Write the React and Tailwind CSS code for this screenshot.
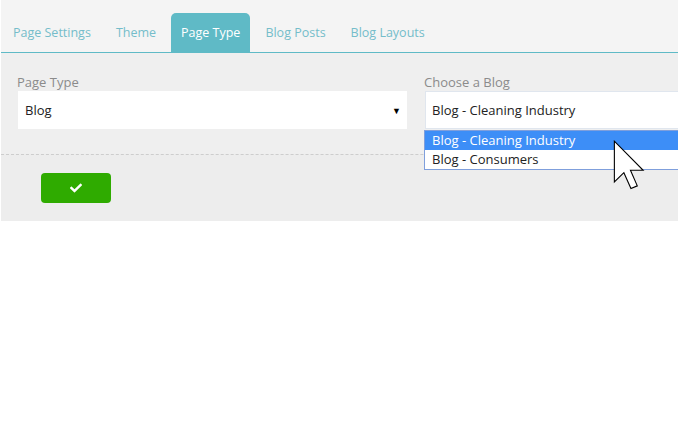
import { FaCheck } from "react-icons/fa";

const tabs = ["Page Settings", "Theme", "Page Type", "Blog Posts", "Blog Layouts"];

function Cursor() {
  return (
    <svg
      className="absolute left-[613px] top-[140px]"
      width="32"
      height="50"
      viewBox="0 0 13 20.5"
    >
      <path
        d="M0.5 0.5 L0.5 17.2 L4.4 13.4 L7.3 19.9 L9.9 18.8 L7.1 12.4 L12.3 12.4 Z"
        fill="#fff"
        stroke="#000"
        strokeWidth="0.45"
        strokeLinejoin="miter"
      />
    </svg>
  );
}

export default function App() {
  return (
    <div className="relative w-[678px] h-[422px] overflow-hidden bg-white font-['Open_Sans',sans-serif]">
      <div className="ml-[1px] bg-[#ededed]">
        {/* tab bar */}
        <div className="h-[53px] bg-[#f4f4f4] border-b border-[#5fbac6] flex items-end pl-[2px]">
          {tabs.map((t) => (
            <div
              key={t}
              className={`h-[39px] px-[10px] mr-[5px] pt-[2px] flex items-center text-[12.5px] ${
                t === "Page Type"
                  ? "bg-[#5fbac6] text-white rounded-t-[5px]"
                  : "text-[#75bdca]"
              }`}
            >
              {t}
            </div>
          ))}
        </div>

        {/* form */}
        <div className="bg-[#efefef] pt-[20px] pb-[25px] flex">
          <div className="ml-[16px] w-[390px] shrink-0">
            <div className="text-[13px] text-[#8b8b8b] leading-[18px] h-[18px]">Page Type</div>
            <div className="ml-[1px] h-[38px] bg-white flex items-center justify-between pl-[7px] pr-[6px] pt-[1px] text-[13px] text-[#222]">
              <span>Blog</span>
              <span className="text-[9px] text-black">▼</span>
            </div>
          </div>
          <div className="relative ml-[17px] shrink-0 w-[300px]">
            <div className="text-[13px] text-[#8b8b8b] leading-[18px] h-[18px]">Choose a Blog</div>
            <div className="ml-[1px] h-[38px] w-[300px] bg-white border border-[#e0e6ee] flex items-center pl-[6px] pt-[1px] text-[13px] text-[#222]">
              Blog - Cleaning Industry
            </div>
            <div className="absolute left-0 top-[57px] w-[300px] bg-white border border-[#7f9fdc] text-[13px] leading-[19px] text-[#222]">
              <div className="bg-[#3d8ef7] text-white pl-[7px]">Blog - Cleaning Industry</div>
              <div className="pl-[7px]">Blog - Consumers</div>
            </div>
          </div>
        </div>

        {/* actions */}
        <div className="border-t border-dashed border-[#cdcdcd] pt-[18px] pb-[18px] pl-[40px]">
          <button className="w-[70px] h-[30px] rounded-[4px] bg-[#2fab00] flex items-center justify-center">
            <FaCheck className="text-white" size={12} />
          </button>
        </div>
      </div>
      <Cursor />
    </div>
  );
}
